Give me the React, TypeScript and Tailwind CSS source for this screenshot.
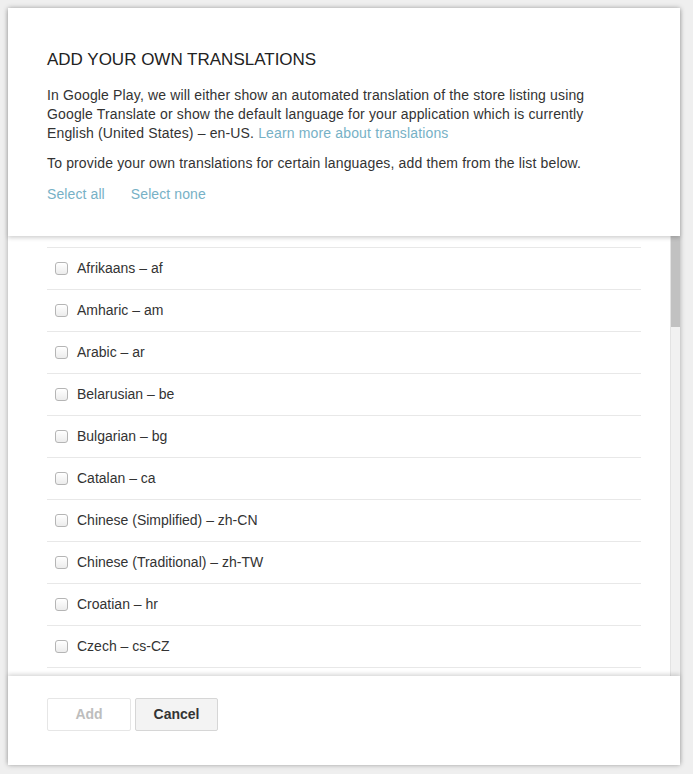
import React from 'react';

// Languages shown in the visible part of the list
const languages = [
  'Afrikaans – af',
  'Amharic – am',
  'Arabic – ar',
  'Belarusian – be',
  'Bulgarian – bg',
  'Catalan – ca',
  'Chinese (Simplified) – zh-CN',
  'Chinese (Traditional) – zh-TW',
  'Croatian – hr',
  'Czech – cs-CZ',
  'Danish – da-DK',
];

const Checkbox = () => (
  <span className="w-[13px] h-[13px] rounded-[3px] border border-[#b5b5b5] bg-gradient-to-b from-white to-[#ececec] shadow-[inset_0_1px_0_rgba(255,255,255,0.8)] shrink-0" />
);

export default function App() {
  return (
    <div
      className="h-[774px] w-[693px] overflow-hidden bg-[#efefef] pt-[8px] pl-[8px] text-[#333]"
      style={{ fontFamily: '"Liberation Sans", Arial, sans-serif' }}
    >
      <div className="w-[672px] h-[757px] bg-white flex flex-col shadow-[0_0_5px_rgba(0,0,0,0.3)] relative">
        {/* Header */}
        <div className="relative z-10 bg-white px-[39px] pt-[42px] pb-[32px] shadow-[0_2px_4px_rgba(0,0,0,0.18)]">
          <h1 className="text-[17px] leading-[20px] text-[#222]">ADD YOUR OWN TRANSLATIONS</h1>
          <p className="mt-[16px] max-w-[548px] text-[14px] leading-[19px] tracking-[0.15px] text-[#333]">
            In Google Play, we will either show an automated translation of the store listing using Google Translate or show the default language for your application which is currently English (United States) – en-US.{' '}
            <a className="text-[#77b1c6]">Learn more about translations</a>
          </p>
          <p className="mt-[11px] text-[14px] leading-[19px] tracking-[0.15px] text-[#333]">
            To provide your own translations for certain languages, add them from the list below.
          </p>
          <div className="mt-[12px] flex gap-[26px] text-[14px] leading-[19px] tracking-[0.1px] text-[#77b1c6]">
            <a>Select all</a>
            <a>Select none</a>
          </div>
        </div>

        {/* List with scrollbar */}
        <div className="flex-1 flex min-h-0">
          <div className="flex-1 overflow-hidden pt-[11px] pl-[39px] pr-[29px]">
            {languages.map((lang) => (
              <div key={lang} className="h-[42px] border-t border-[#e8e8e8] flex items-center gap-[9px] pl-[8px] text-[14px]">
                <Checkbox />
                <span>{lang}</span>
              </div>
            ))}
          </div>
          <div className="w-[10px] bg-[#f1f1f1] border-l border-[#e3e3e3] flex flex-col">
            <div className="h-[91px] bg-[#c1c1c1]" />
          </div>
        </div>

        {/* Footer */}
        <div className="relative z-10 bg-white h-[89px] px-[39px] pt-[22px] flex gap-[4px] items-start shadow-[0_-2px_4px_rgba(0,0,0,0.15)]">
          <button className="w-[84px] h-[33px] leading-[31px] border border-[#e6e6e6] rounded-[2px] bg-white text-[14px] font-bold text-[#bdbdbd]">
            Add
          </button>
          <button className="w-[83px] h-[33px] leading-[31px] border border-[#d6d6d6] rounded-[2px] bg-[#f3f3f3] text-[14px] font-bold text-[#333]">
            Cancel
          </button>
        </div>
      </div>
    </div>
  );
}
